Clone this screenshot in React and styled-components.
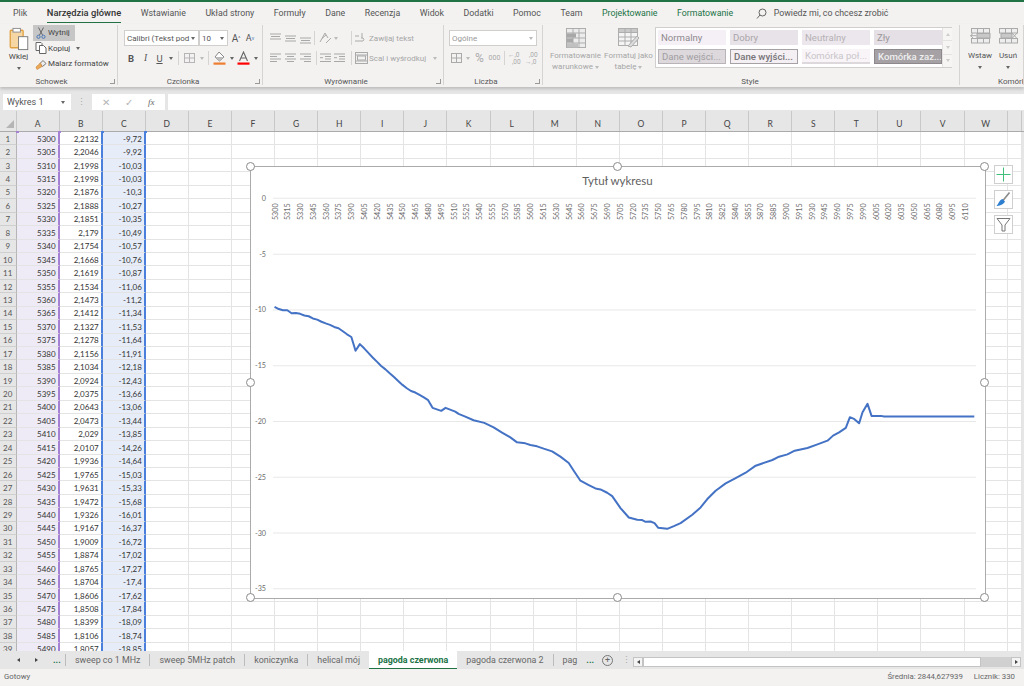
import React from 'react';
import styled, { createGlobalStyle, css } from 'styled-components';

const UI_FONT = 'Roboto, "Noto Sans", sans-serif';
const CELL_FONT = 'Lato, "Liberation Sans", sans-serif';
const GREEN = '#217346';

const GlobalStyle = createGlobalStyle`
html, body { margin: 0; padding: 0; background: #f3f2f1; }
* { box-sizing: border-box; }
`;

const menu = ['Wstawianie', 'Układ strony', 'Formuły', 'Dane', 'Recenzja', 'Widok', 'Dodatki', 'Pomoc', 'Team'];
const aCol = Array.from({ length: 39 }, (_, i) => 5300 + i * 5);
const bCol = ['2,2132','2,2046','2,1998','2,1998','2,1876','2,1888','2,1851','2,179','2,1754','2,1668','2,1619','2,1534','2,1473','2,1412','2,1327','2,1278','2,1156','2,1034','2,0924','2,0375','2,0643','2,0473','2,029','2,0107','1,9936','1,9765','1,9631','1,9472','1,9326','1,9167','1,9009','1,8874','1,8765','1,8704','1,8606','1,8508','1,8399','1,8106','1,8057'];
const cCol = ['-9,72','-9,92','-10,03','-10,03','-10,3','-10,27','-10,35','-10,49','-10,57','-10,76','-10,87','-11,06','-11,2','-11,34','-11,53','-11,64','-11,91','-12,18','-12,43','-13,66','-13,06','-13,44','-13,85','-14,26','-14,64','-15,03','-15,33','-15,68','-16,01','-16,37','-16,72','-17,02','-17,27','-17,4','-17,62','-17,84','-18,09','-18,74','-18,85'];
const colNames = 'ABCDEFGHIJKLMNOPQRSTUVW'.split('');
const sheets = ['sweep co 1 MHz', 'sweep 5MHz patch', 'koniczynka', 'helical mój', 'pagoda czerwona', 'pagoda czerwona 2', 'pag'];

// rest of the curve, read off the picture in page pixels
const midCurve = [[277,232],[303,241],[316,232],[345,243],[355,250],[375,258],[400,269],[432,277],[460,290],[485,306],[510,320],[530,335],[555,338],[570,343],[590,347],[610,354],[635,362],[660,378],[685,397],[700,420],[720,450],[745,463],[765,473],[780,476],[800,486],[815,496],[840,532],[865,560],[890,567],[905,568],[915,573],[930,572],[942,577],[953,591],[980,594],[1000,586],[1020,577]].map(([x, y]) => [340 + x / 3, 330 + y / 3]);
const endCurve = [[0,457],[35,432],[60,410],[80,385],[105,360],[135,338],[165,322],[195,306],[225,285],[275,268],[295,258],[320,251],[342,240],[380,232],[410,221],[440,210],[457,195],[475,185],[495,172],[507,140],[520,145],[535,158],[545,125],[560,100],[572,136],[600,136],[610,138],[880,138]].map(([x, y]) => [680 + x / 3, 370 + y / 3]);
const startCurve = cCol.slice(0, 37).map((v, i) => [274.5 + i * 4.26, 198.3 - 11.13 * parseFloat(v.replace(',', '.'))]);
const curve = [...startCurve, ...midCurve, ...endCurve].map(([x, y]) => `${x.toFixed(1)},${y.toFixed(1)}`).join(' ');

const xLabels = Array.from({ length: 55 }, (_, i) => 5300 + i * 15);
const yTicks = [0, -5, -10, -15, -20, -25, -30, -35];

const Page = styled.div`
width: 1024px;
height: 686px;
overflow: hidden;
display: flex;
flex-direction: column;
background: #f3f2f1;
border-top: 2px solid ${GREEN};
font-family: ${UI_FONT};
color: #444;
`;

const MenuBar = styled.div`
height: 22px;
flex: none;
display: flex;
align-items: center;
gap: 19.5px;
padding-left: 13px;
font-size: 8.8px;
color: #555;
`;

const MenuItem = styled.div`
line-height: 18px;
white-space: nowrap;
${(p) => p.$active && css`
  color: #333;
  font-size: 9.3px;
  font-weight: 500;
  border-bottom: 1.5px solid ${GREEN};
`}
${(p) => p.$context && css`
  color: ${GREEN};
`}
`;

const TellMe = styled.div`
display: flex;
align-items: center;
gap: 7px;
margin-left: 3px;
`;

const Ribbon = styled.div`
height: 63px;
flex: none;
display: flex;
background: #f3f2f1;
box-shadow: 0 2px 3px rgba(0, 0, 0, 0.18);
position: relative;
z-index: 2;
font-size: 8px;
`;

const Group = styled.div`
width: ${(p) => p.$w}px;
flex: none;
display: flex;
flex-direction: column;
position: relative;
padding-left: ${(p) => p.$pad || 0}px;
&::after {
  content: '';
  position: absolute;
  right: 0;
  top: 1px;
  bottom: 2px;
  width: 1px;
  background: #d6d4d2;
}
`;

const GroupBody = styled.div`
flex: 1;
display: flex;
min-height: 0;
`;

const GroupLabel = styled.div`
height: 14px;
flex: none;
display: grid;
grid-template-columns: ${(p) => (p.$plain ? '1fr' : '1fr 12px')};
justify-items: center;
align-items: center;
margin-left: ${(p) => (p.$pad ? -p.$pad : 0)}px;
padding: 2px 3px 0 0;
font-size: 8px;
color: #555;
white-space: nowrap;
`;

const CutLabel = styled(GroupLabel)`
justify-items: start;
padding-left: 38px;
`;

const Launcher = styled.span`
justify-self: end;
width: 5px;
height: 5px;
border-right: 1px solid #999;
border-bottom: 1px solid #999;
`;

const Caret = styled.span`
display: inline-block;
flex: none;
width: 0;
height: 0;
margin-left: ${(p) => p.$ml || 0}px;
border-left: 2.5px solid transparent;
border-right: 2.5px solid transparent;
border-top: 3px solid ${(p) => p.$c || '#666'};
`;

const PasteButton = styled.div`
width: 25px;
margin-left: 6px;
display: flex;
flex-direction: column;
align-items: center;
padding-top: 3px;
line-height: 10px;
gap: 1px;
`;

const ClipColumn = styled.div`
display: flex;
flex-direction: column;
margin-left: 2px;
padding-top: 1px;
`;

const ClipRow = styled.div`
height: 15.5px;
width: ${(p) => (p.$on ? '42px' : 'auto')};
display: flex;
align-items: center;
gap: 1px;
padding-left: 2px;
white-space: nowrap;
background: ${(p) => (p.$on ? '#c6c6c6' : 'transparent')};
`;

const Stack = styled.div`
display: flex;
flex-direction: column;
gap: 4px;
padding-top: 6px;
`;

const Row = styled.div`
height: 16px;
display: flex;
align-items: center;
`;

const Slot = styled.div`
width: ${(p) => p.$w}px;
height: 16px;
flex: none;
display: flex;
align-items: center;
justify-content: center;
font-size: ${(p) => p.$fs || 9.5}px;
font-weight: ${(p) => p.$fw || 400};
font-style: ${(p) => p.$it || 'normal'};
font-family: ${(p) => p.$serif ? '"Liberation Serif", serif' : 'inherit'};
text-decoration: ${(p) => p.$ul ? 'underline' : 'none'};
color: ${(p) => p.$c || '#555'};
`;

const Sep = styled.div`
width: 1px;
height: 14px;
flex: none;
background: #d6d4d2;
margin-left: ${(p) => p.$ml || 0}px;
margin-right: ${(p) => p.$mr || 0}px;
`;

const Select = styled.div`
width: ${(p) => p.$w}px;
height: 16px;
flex: none;
display: flex;
align-items: center;
justify-content: space-between;
padding: 0 3px 0 2px;
margin-right: ${(p) => p.$mr || 0}px;
background: #fff;
border: 1px solid #d0cfcd;
color: ${(p) => p.$c || '#555'};
white-space: nowrap;
overflow: hidden;
`;

const DimText = styled.span`
color: #a6a6a6;
white-space: nowrap;
margin-left: ${(p) => p.$ml || 0}px;
`;

const BigButton = styled.div`
width: ${(p) => p.$w}px;
flex: none;
display: flex;
flex-direction: column;
align-items: center;
padding-top: 4px;
margin-left: ${(p) => p.$ml || 0}px;
color: ${(p) => p.$c || '#a6a6a6'};
font-size: 8px;
line-height: 10.5px;
text-align: center;
white-space: nowrap;
`;

const BigIcon = styled.div`
height: 21px;
margin-bottom: 2px;
`;

const LowCaret = styled(Caret)`
margin-top: 4px;
`;

const UpCaret = styled(Caret)`
transform: rotate(180deg);
`;

const Gallery = styled.div`
width: 297px;
height: 41px;
margin: 3px 0 0 2px;
flex: none;
display: flex;
background: #fff;
border: 1px solid #d0cfcd;
`;

const GalleryCells = styled.div`
flex: 1;
display: grid;
grid-template-columns: repeat(4, 68px);
grid-template-rows: 15px 15px;
column-gap: 4px;
row-gap: 4px;
padding: 2px 0 0 2px;
`;

const variants = {
  normal: css`background: #f5f0f6; color: #8e8a8e;`,
  good: css`background: #e8e3e8; color: #a9a5a9;`,
  neutral: css`background: #ece7ec; color: #b5b1b5;`,
  bad: css`background: #e5e0e5; color: #9b979b;`,
  input: css`background: #dcd8dc; color: #a19da1; border: 1px solid #b8b4b8;`,
  output: css`background: #f3eff3; color: #777377; border: 1px solid #a5a1a5; font-weight: 500;`,
  linked: css`background: #f8f4f8; color: #c9c5c9; border-bottom: 2px solid #dcd8dc;`,
  check: css`background: #a5a1a5; color: #eee; border: 1px solid #8c888c; font-weight: 500;`,
};

const StyleCell = styled.div`
display: flex;
align-items: center;
padding-left: 3px;
font-size: 9.6px;
white-space: nowrap;
overflow: hidden;
${(p) => variants[p.$kind]}
`;

const GalleryScroll = styled.div`
width: 10px;
flex: none;
display: flex;
flex-direction: column;
border-left: 1px solid #e4e3e1;
`;

const ScrollStep = styled.div`
flex: 1;
display: flex;
align-items: center;
justify-content: center;
border-bottom: 1px solid #e4e3e1;
background: #f6f5f4;
&:last-child { border-bottom: none; }
`;

const FormulaBar = styled.div`
height: 24px;
flex: none;
display: flex;
align-items: center;
background: #e6e6e6;
padding: 7px 0 1px 3px;
`;

const NameBox = styled.div`
width: 68px;
height: 16px;
flex: none;
display: flex;
align-items: center;
justify-content: space-between;
padding: 0 6px 0 4px;
background: #fff;
font-size: 9px;
color: #555;
`;

const Dots = styled.div`
width: 21px;
flex: none;
text-align: center;
color: #aaa;
font-size: 9px;
line-height: 10px;
`;

const FxBox = styled.div`
width: 73px;
height: 16px;
flex: none;
display: flex;
align-items: center;
justify-content: space-around;
padding: 0 3px;
background: #fff;
color: #b5b5b5;
font-size: 10px;
`;

const FxMark = styled.span`
font-family: "Liberation Serif", serif;
font-style: italic;
color: #666;
font-size: 9px;
`;

const FormulaInput = styled.div`
flex: 1;
height: 16px;
margin-left: 3px;
background: #fff;
`;

const Sheet = styled.div`
height: 540px;
flex: none;
position: relative;
overflow: hidden;
background: #e6e6e6;
`;

const ColHeader = styled.div`
height: 21px;
display: flex;
background: #e6e6e6;
border-bottom: 1px solid #ababab;
`;

const Corner = styled.div`
width: 16.5px;
flex: none;
display: flex;
align-items: flex-end;
justify-content: flex-end;
padding: 0 2px 3px 0;
border-right: 1px solid #c8c8c8;
`;

const ColName = styled.div`
width: ${(p) => p.$w || 43.1}px;
flex: none;
display: flex;
align-items: center;
justify-content: center;
padding-top: 5px;
font-family: ${CELL_FONT};
font-size: 8.5px;
color: #444;
border-right: 1px solid #c8c8c8;
`;

const GridRow = styled.div`
height: 13.45px;
display: flex;
font-family: ${CELL_FONT};
font-size: 8px;
`;

const RowName = styled.div`
width: 16.5px;
flex: none;
display: flex;
align-items: center;
justify-content: center;
padding-top: 1px;
background: #e6e6e6;
color: #555;
border-right: 1px solid #b5b5b5;
border-bottom: 1px solid #cfcfcf;
`;

const Cell = styled.div`
width: ${(p) => p.$w || 43.1}px;
flex: none;
display: flex;
align-items: center;
justify-content: flex-end;
padding: 1px 2px 0 0;
background: ${(p) => p.$bg || '#fff'};
color: #333;
border-right: ${(p) => (p.$edge ? `2px solid ${p.$edge}` : '1px solid #e4e4e4')};
border-bottom: 1px solid #e4e4e4;
white-space: nowrap;
`;

const SelMark = styled.div`
position: absolute;
left: ${(p) => p.$x}px;
top: 20px;
width: 3px;
height: 2px;
background: ${(p) => p.$c};
`;

const ChartBox = styled.div`
position: absolute;
left: 249.5px;
top: 54.5px;
width: 736px;
height: 433px;
background: #fff;
border: 1.5px solid #ababab;
`;

const ChartSvg = styled.svg`
display: block;
width: 100%;
height: 100%;
text {
  font-family: ${CELL_FONT};
  fill: #6d6d6d;
  font-size: 7.2px;
}
`;

const Handle = styled.div`
position: absolute;
left: ${(p) => p.$x}%;
top: ${(p) => p.$y}%;
width: 9px;
height: 9px;
margin: -4.5px 0 0 -4.5px;
border-radius: 50%;
background: #fff;
border: 1.5px solid #8b8b8b;
`;

const ChartTitle = styled.div`
position: absolute;
top: 7px;
left: 0;
right: 0;
text-align: center;
font-family: ${CELL_FONT};
font-size: 11.5px;
color: #5f5f5f;
`;

const ChartTools = styled.div`
position: absolute;
left: 994px;
top: 54px;
display: flex;
flex-direction: column;
gap: 6px;
`;

const ToolButton = styled.div`
width: 19px;
height: 19px;
display: flex;
align-items: center;
justify-content: center;
background: #fff;
border: 1px solid #cfcfcf;
`;

const TabBar = styled.div`
height: 18px;
flex: none;
display: flex;
align-items: center;
background: #e6e6e6;
font-size: 8.9px;
color: #666;
`;

const TabNav = styled.div`
width: 65px;
height: 100%;
flex: none;
display: flex;
align-items: center;
padding-left: 17px;
gap: 15px;
`;

const Triangle = styled.span`
width: 0;
height: 0;
border-top: 2.5px solid transparent;
border-bottom: 2.5px solid transparent;
${(p) => (p.$left
    ? css`border-right: 3px solid #444;`
    : css`border-left: 3px solid #444;`)}
`;

const MoreDots = styled.span`
color: ${GREEN};
font-weight: 700;
line-height: 10px;
`;

const SheetTab = styled.div`
height: ${(p) => (p.$active ? '18px' : '12px')};
align-self: ${(p) => (p.$active ? 'flex-start' : 'center')};
display: flex;
align-items: center;
padding: 0 9px;
white-space: nowrap;
${(p) => (p.$active
    ? css`
      background: #fff;
      color: ${GREEN};
      font-weight: 700;
      border-bottom: 1.5px solid ${GREEN};
    `
    : css`
      border-left: ${p.$noEdge ? 'none' : '1px solid #bcbcbc'};
    `)}
`;

const AddSheet = styled.span`
width: 11px;
height: 11px;
margin-left: 8px;
margin-right: 3px;
display: flex;
align-items: center;
justify-content: center;
border: 1px solid #777;
border-radius: 50%;
font-size: 9px;
line-height: 9px;
color: #666;
`;

const HScroll = styled.div`
position: absolute;
left: 633px;
right: 3px;
top: 657px;
height: 10px;
display: flex;
align-items: stretch;
background: #d0d0d0;
`;

const HButton = styled.div`
width: 10px;
flex: none;
display: flex;
align-items: center;
justify-content: center;
background: #f4f4f4;
border: 1px solid #c4c4c4;
`;

const HThumb = styled.div`
width: 338px;
background: #fff;
border: 1px solid #c4c4c4;
margin-right: auto;
`;

const StatusBar = styled.div`
height: 14px;
flex: none;
display: flex;
align-items: center;
justify-content: space-between;
padding: 0 9px 0 4px;
background: #f3f2f1;
font-size: 7.8px;
color: #666;
`;

const StatusRight = styled.div`
display: flex;
gap: 11px;
`;

const Lines = ({ rows, c = '#a8a8a8', w = 13 }) => (
  <svg width={w} height="12" viewBox={`0 0 ${w} 12`}>
    {rows.map(([x1, x2, y], i) => (
      <line key={i} x1={x1} x2={x2} y1={y} y2={y} stroke={c} strokeWidth="1" />
    ))}
  </svg>
);

const PasteIcon = () => (
  <svg width="22" height="24" viewBox="0 0 22 26">
    <rect x="1.5" y="3.5" width="14" height="19" rx="1" fill="#f6d6a2" stroke="#e0a040" strokeWidth="1.4" />
    <rect x="4.5" y="1.5" width="8" height="4" fill="#fff" stroke="#888" />
    <rect x="10.5" y="10.5" width="10" height="14" fill="#fff" stroke="#777" />
  </svg>
);

const ScissorsIcon = () => (
  <svg width="12" height="12" viewBox="-1 0 12 12" fill="none" stroke="#666">
    <path d="M2.5 0.5 L6.5 8 M7.5 0.5 L3.5 8" />
    <circle cx="2.5" cy="9.8" r="1.6" stroke="#4a78b8" />
    <circle cx="7.5" cy="9.8" r="1.6" stroke="#4a78b8" />
  </svg>
);

const CopyIcon = () => (
  <svg width="12" height="12" viewBox="0 0 12 12" fill="#fff" stroke="#666">
    <path d="M1 0.5 h5 l1 1 v7 h-6 z" />
    <path d="M4.5 3.5 h4 l2.5 2.5 v5.5 h-6.5 z" />
  </svg>
);

const BrushIcon = () => (
  <svg width="12" height="12" viewBox="0 0 12 12">
    <path d="M5 5.5 L8 2.5 L11 5.5 L7.5 8.5 z" fill="#eee" stroke="#777" />
    <path d="M5.5 5 L1 9 L2 11.5 L7 8.5 z" fill="#eda95a" stroke="#c98230" strokeWidth="0.6" />
  </svg>
);

const GridIcon = ({ w = 13, c = '#b5b5b5' }) => (
  <svg width={w} height="12" viewBox="0 0 13 12" fill="none" stroke={c}>
    <rect x="1.5" y="1.5" width="10" height="9" />
    <path d="M6.5 1.5 v9 M1.5 6 h10" />
  </svg>
);

const FillIcon = () => (
  <svg width="13" height="14" viewBox="0 0 13 14">
    <path d="M6 1 L11 6 L6.5 10 L2 6 z" fill="#fff" stroke="#888" />
    <path d="M2 6 h9 L6.5 10 z" fill="#bbb" />
    <rect x="0.5" y="11.5" width="12" height="2.2" fill="#ed7d31" />
  </svg>
);

const FontColorIcon = () => (
  <svg width="13" height="14" viewBox="0 0 13 14">
    <path d="M2.5 10 L6.5 1 L10.5 10 M4 7 h5" fill="none" stroke="#666" strokeWidth="1.1" />
    <rect x="0.5" y="11.5" width="12" height="2.2" fill="#f00" />
  </svg>
);

const WrapIcon = () => (
  <svg width="13" height="13" viewBox="0 0 13 13" fill="none" stroke="#aaa">
    <path d="M1 4 h4 M8 1 v5 M1 9 h8 a2 2 0 0 0 0 -3 h-2" />
  </svg>
);

const MergeIcon = () => (
  <svg width="13" height="12" viewBox="0 0 13 12" fill="none" stroke="#aaa">
    <rect x="0.5" y="0.5" width="12" height="11" />
    <rect x="2.5" y="4" width="8" height="4" />
    <path d="M0.5 3 h12 M0.5 9 h12" />
  </svg>
);

const OrientIcon = () => (
  <svg width="13" height="12" viewBox="0 0 13 12" fill="none" stroke="#aaa">
    <path d="M1 10 L6 1 L9 6 M3 6.5 L7 3" />
    <path d="M7 11 L12 6" />
  </svg>
);

const CondIcon = () => (
  <svg width="20" height="20" viewBox="0 0 20 20" fill="#ececec" stroke="#adadad">
    <rect x="0.5" y="0.5" width="19" height="19" />
    <path d="M0.5 5 h19 M0.5 10 h19 M0.5 15 h19 M7 0.5 v19 M13 0.5 v19" fill="none" />
    <rect x="1" y="5.5" width="9" height="4" fill="#a8a8a8" stroke="none" />
    <rect x="1" y="10.5" width="6" height="4" fill="#a8a8a8" stroke="none" />
    <rect x="1" y="15.5" width="11" height="4" fill="#c0c0c0" stroke="none" />
  </svg>
);

const TableIcon = () => (
  <svg width="22" height="20" viewBox="0 0 22 20" fill="none" stroke="#adadad">
    <rect x="0.5" y="0.5" width="19" height="17" fill="#f4f4f4" />
    <rect x="0.5" y="0.5" width="19" height="4" fill="#c8c8c8" />
    <path d="M0.5 9 h19 M0.5 13 h19 M7 0.5 v17 M13 0.5 v17" />
    <path d="M10 18 L19 8 L21 10 L13 19 z" fill="#dcdcdc" />
  </svg>
);

const InsertIcon = () => (
  <svg width="21" height="16" viewBox="0 0 21 16" fill="#eee" stroke="#aaa">
    <rect x="1.5" y="0.5" width="18" height="4.5" />
    <rect x="1.5" y="10.5" width="18" height="4.5" />
    <path d="M7.5 0.5 v4.5 M13.5 0.5 v4.5 M7.5 10.5 v4.5 M13.5 10.5 v4.5" />
    <rect x="7" y="5.5" width="13" height="4.5" fill="#c8c8c8" />
    <path d="M0.5 7.7 h6 M3 5.5 l-2.5 2.2 l2.5 2.2" fill="none" />
  </svg>
);

const DeleteIcon = () => (
  <svg width="21" height="16" viewBox="0 0 21 16" fill="#eee" stroke="#aaa">
    <rect x="1.5" y="0.5" width="18" height="4.5" />
    <rect x="1.5" y="10.5" width="18" height="4.5" />
    <path d="M7.5 0.5 v4.5 M13.5 0.5 v4.5 M7.5 10.5 v4.5 M13.5 10.5 v4.5" />
    <rect x="3" y="5.5" width="11" height="4.5" fill="#c8c8c8" />
    <path d="M14 5 l5 5.5 M19 5 l-5 5.5" fill="none" />
  </svg>
);

const DecimalIcon = ({ top, bottom }) => (
  <svg width="16" height="14" viewBox="0 0 16 14" fill="#aaa" fontSize="6.5" fontFamily="Roboto, sans-serif">
    <text x={top.x} y="6">{top.t}</text>
    <text x={bottom.x} y="12.5">{bottom.t}</text>
  </svg>
);

const align1 = [[1, 12, 2], [2, 11, 4.5], [1, 12, 7]];
const align2 = [[1, 12, 4], [2, 11, 6.5], [1, 12, 9]];
const align3 = [[1, 12, 6], [2, 11, 8.5], [1, 12, 11]];
const leftA = [[1, 12, 2], [1, 8, 4.5], [1, 12, 7], [1, 8, 9.5]];
const centerA = [[1, 12, 2], [3, 10, 4.5], [1, 12, 7], [3, 10, 9.5]];
const rightA = [[1, 12, 2], [5, 12, 4.5], [1, 12, 7], [5, 12, 9.5]];
const indentA = [[1, 12, 2], [6, 12, 4.5], [6, 12, 7], [1, 12, 9.5], [1, 4, 5.7]];

const Clipboard = () => (
  <Group $w={118}>
    <GroupBody>
      <PasteButton>
        <PasteIcon />
        Wklej
        <LowCaret />
      </PasteButton>
      <ClipColumn>
        <ClipRow $on><ScissorsIcon />Wytnij</ClipRow>
        <ClipRow><CopyIcon />Kopiuj <Caret $ml={5} /></ClipRow>
        <ClipRow><BrushIcon />Malarz formatów</ClipRow>
      </ClipColumn>
    </GroupBody>
    <GroupLabel><span>Schowek</span><Launcher /></GroupLabel>
  </Group>
);

const FontGroup = () => (
  <Group $w={145} $pad={6}>
    <GroupBody>
      <Stack>
        <Row>
          <Select $w={75}>Calibri (Tekst pod <Caret /></Select>
          <Select $w={29} $mr={1}>10 <Caret /></Select>
          <Slot $w={14} $fs={10}>A<sup style={{ fontSize: 5 }}>^</sup></Slot>
          <Slot $w={14} $fs={9}>A<sup style={{ fontSize: 5, color: '#4a78b8' }}>v</sup></Slot>
        </Row>
        <Row>
          <Slot $w={14} $fw={700}>B</Slot>
          <Slot $w={15} $it="italic" $serif>I</Slot>
          <Slot $w={13} $ul>U</Slot>
          <Slot $w={10}><Caret /></Slot>
          <Sep $ml={2} $mr={2} />
          <Slot $w={17}><GridIcon /></Slot>
          <Slot $w={8}><Caret $c="#bbb" /></Slot>
          <Sep $ml={2} $mr={2} />
          <Slot $w={17}><FillIcon /></Slot>
          <Slot $w={7}><Caret /></Slot>
          <Slot $w={17}><FontColorIcon /></Slot>
          <Slot $w={7}><Caret /></Slot>
        </Row>
      </Stack>
    </GroupBody>
    <GroupLabel $pad={6}><span>Czcionka</span><Launcher /></GroupLabel>
  </Group>
);

const AlignGroup = () => (
  <Group $w={181} $pad={5}>
    <GroupBody>
      <Stack>
        <Row>
          <Slot $w={15}><Lines rows={align1} /></Slot>
          <Slot $w={15}><Lines rows={align2} /></Slot>
          <Slot $w={15}><Lines rows={align3} /></Slot>
          <Sep $ml={1} $mr={3} />
          <Slot $w={14}><OrientIcon /></Slot>
          <Slot $w={8}><Caret $c="#bbb" /></Slot>
          <Sep $ml={11} $mr={1} />
          <Slot $w={14}><WrapIcon /></Slot>
          <DimText $ml={2}>Zawijaj tekst</DimText>
        </Row>
        <Row>
          <Slot $w={15}><Lines rows={leftA} /></Slot>
          <Slot $w={15}><Lines rows={centerA} /></Slot>
          <Slot $w={15}><Lines rows={rightA} /></Slot>
          <Sep $ml={3} $mr={1} />
          <Slot $w={14}><Lines rows={indentA} /></Slot>
          <Slot $w={15}><Lines rows={indentA} /></Slot>
          <Sep $ml={4} $mr={2} />
          <Slot $w={14}><MergeIcon /></Slot>
          <DimText $ml={1}>Scal i wyśrodkuj</DimText>
          <Caret $c="#bbb" $ml={7} />
        </Row>
      </Stack>
    </GroupBody>
    <GroupLabel $pad={5}><span>Wyrównanie</span><Launcher /></GroupLabel>
  </Group>
);

const NumberGroup = () => (
  <Group $w={99} $pad={5}>
    <GroupBody>
      <Stack>
        <Row>
          <Select $w={88} $c="#999">Ogólne <Caret $c="#bbb" /></Select>
        </Row>
        <Row>
          <Slot $w={15}><GridIcon c="#aaa" /></Slot>
          <Slot $w={8}><Caret $c="#bbb" /></Slot>
          <Slot $w={15} $fs={12} $c="#aaa">%</Slot>
          <Slot $w={15} $fs={7} $c="#aaa">000</Slot>
          <Sep $ml={2} $mr={2} />
          <Slot $w={17}><DecimalIcon top={{ x: 0, t: '←,0' }} bottom={{ x: 4, t: ',00' }} /></Slot>
          <Slot $w={17}><DecimalIcon top={{ x: 4, t: ',00' }} bottom={{ x: 0, t: '→,0' }} /></Slot>
        </Row>
      </Stack>
    </GroupBody>
    <GroupLabel $pad={5}><span>Liczba</span><Launcher /></GroupLabel>
  </Group>
);

const StyleGroup = () => (
  <Group $w={417} $pad={7}>
    <GroupBody>
      <BigButton $w={51}>
        <BigIcon><CondIcon /></BigIcon>
        Formatowanie
        <span>warunkowe <Caret $c="#bbb" /></span>
      </BigButton>
      <BigButton $w={49} $ml={3}>
        <BigIcon><TableIcon /></BigIcon>
        Formatuj jako
        <span>tabelę <Caret $c="#bbb" /></span>
      </BigButton>
      <Gallery>
        <GalleryCells>
          <StyleCell $kind="normal">Normalny</StyleCell>
          <StyleCell $kind="good">Dobry</StyleCell>
          <StyleCell $kind="neutral">Neutralny</StyleCell>
          <StyleCell $kind="bad">Zły</StyleCell>
          <StyleCell $kind="input">Dane wejści...</StyleCell>
          <StyleCell $kind="output">Dane wyjści...</StyleCell>
          <StyleCell $kind="linked">Komórka poł...</StyleCell>
          <StyleCell $kind="check">Komórka zaz...</StyleCell>
        </GalleryCells>
        <GalleryScroll>
          <ScrollStep><UpCaret $c="#ccc" /></ScrollStep>
          <ScrollStep><Caret $c="#ccc" /></ScrollStep>
          <ScrollStep><Caret $c="#ccc" /></ScrollStep>
        </GalleryScroll>
      </Gallery>
    </GroupBody>
    <GroupLabel $pad={7} $plain><span>Style</span></GroupLabel>
  </Group>
);

const CellsGroup = () => (
  <Group $w={64} $pad={6}>
    <GroupBody>
      <BigButton $w={28} $c="#555">
        <BigIcon><InsertIcon /></BigIcon>
        Wstaw
        <LowCaret />
      </BigButton>
      <BigButton $w={28} $c="#555">
        <BigIcon><DeleteIcon /></BigIcon>
        Usuń
        <LowCaret />
      </BigButton>
    </GroupBody>
    <CutLabel $pad={6} $plain><span>Komórki</span></CutLabel>
  </Group>
);

const Chart = () => (
  <ChartBox>
    <ChartSvg viewBox="251 167 733 430" preserveAspectRatio="none">
      {yTicks.map((t) => {
        const y = 198.3 - 11.13 * t;
        return (
          <g key={t}>
            <line x1="273" x2="975" y1={y} y2={y} stroke="#e8e8e8" strokeWidth="1" />
            <text x="266" y={y + 2.5} textAnchor="end">{t}</text>
          </g>
        );
      })}
      {xLabels.map((l, i) => {
        const x = 275 + i * 12.77;
        return (
          <text key={l} transform={`translate(${x + 2.5} 220) rotate(-90)`}>{l}</text>
        );
      })}
      <polyline points={curve} fill="none" stroke="#4472c4" strokeWidth="2" strokeLinejoin="round" />
    </ChartSvg>
    <ChartTitle>Tytuł wykresu</ChartTitle>
    {[[0, 0], [50, 0], [100, 0], [0, 50], [100, 50], [0, 100], [50, 100], [100, 100]].map(([x, y]) => (
      <Handle key={`${x}-${y}`} $x={x} $y={y} />
    ))}
  </ChartBox>
);

const Tools = () => (
  <ChartTools>
    <ToolButton>
      <svg width="15" height="15" viewBox="0 0 15 15">
        <path d="M7.5 0.5 v14 M0.5 7.5 h14" stroke="#3fc07a" strokeWidth="1" />
      </svg>
    </ToolButton>
    <ToolButton>
      <svg width="15" height="15" viewBox="0 0 15 15">
        <path d="M13.5 0.5 L7 8.5" stroke="#8a8a8a" strokeWidth="1.6" />
        <path d="M6.5 7 L9 9.5 C7 13 3 14 0.5 14 C2.5 12 3 8 6.5 7 z" fill="#2f7fd1" />
      </svg>
    </ToolButton>
    <ToolButton>
      <svg width="15" height="15" viewBox="0 0 15 15" fill="#fff" stroke="#777">
        <path d="M1 1.5 h13 L9 8 v6 h-3 V8 z" />
      </svg>
    </ToolButton>
  </ChartTools>
);

const Grid = () => (
  <>
    <ColHeader>
      <Corner>
        <svg width="8" height="8" viewBox="0 0 8 8"><path d="M8 0 V8 H0 z" fill="#b5b5b5" /></svg>
      </Corner>
      {colNames.map((c) => <ColName key={c}>{c}</ColName>)}
      <ColName $w={14} />
    </ColHeader>
    {aCol.map((a, i) => (
      <GridRow key={a}>
        <RowName>{i + 1}</RowName>
        <Cell $bg="#efebf6" $edge="#a481d2">{a}</Cell>
        <Cell $edge="#4a7fdc">{bCol[i]}</Cell>
        <Cell $bg="#e6edf8" $edge="#4a7fdc">{cCol[i]}</Cell>
        {colNames.slice(3).map((c) => <Cell key={c} />)}
        <Cell $w={14} />
      </GridRow>
    ))}
    <SelMark $x={16} $c="#a481d2" />
    <SelMark $x={58} $c="#a481d2" />
    <SelMark $x={101} $c="#4a7fdc" />
    <SelMark $x={144} $c="#4a7fdc" />
  </>
);

const App = () => (
  <Page>
    <GlobalStyle />
    <MenuBar>
      <MenuItem>Plik</MenuItem>
      <MenuItem $active>Narzędzia główne</MenuItem>
      {menu.map((m) => <MenuItem key={m}>{m}</MenuItem>)}
      <MenuItem $context>Projektowanie</MenuItem>
      <MenuItem $context>Formatowanie</MenuItem>
      <TellMe>
        <svg width="11" height="11" viewBox="0 0 11 11" fill="none" stroke="#666">
          <circle cx="6.5" cy="4.5" r="3.5" />
          <path d="M4 7 L1 10.5" />
        </svg>
        Powiedz mi, co chcesz zrobić
      </TellMe>
    </MenuBar>
    <Ribbon>
      <Clipboard />
      <FontGroup />
      <AlignGroup />
      <NumberGroup />
      <StyleGroup />
      <CellsGroup />
    </Ribbon>
    <FormulaBar>
      <NameBox>Wykres 1 <Caret /></NameBox>
      <Dots>⋮</Dots>
      <FxBox>
        <span>✕</span>
        <span>✓</span>
        <FxMark>fx</FxMark>
      </FxBox>
      <FormulaInput />
    </FormulaBar>
    <Sheet>
      <Grid />
      <Chart />
      <Tools />
    </Sheet>
    <TabBar>
      <TabNav>
        <Triangle $left />
        <Triangle />
        <MoreDots>...</MoreDots>
      </TabNav>
      {sheets.map((s, i) => (
        <SheetTab key={s} $active={i === 4} $noEdge={i === 5}>{s}</SheetTab>
      ))}
      <MoreDots>...</MoreDots>
      <AddSheet>+</AddSheet>
      <Dots>⋮</Dots>
    </TabBar>
    <HScroll>
      <HButton><Triangle $left /></HButton>
      <HThumb />
      <HButton><Triangle /></HButton>
    </HScroll>
    <StatusBar>
      Gotowy
      <StatusRight>
        <span>Średnia: 2844,627939</span>
        <span>Licznik: 330</span>
      </StatusRight>
    </StatusBar>
  </Page>
);

export default App;
